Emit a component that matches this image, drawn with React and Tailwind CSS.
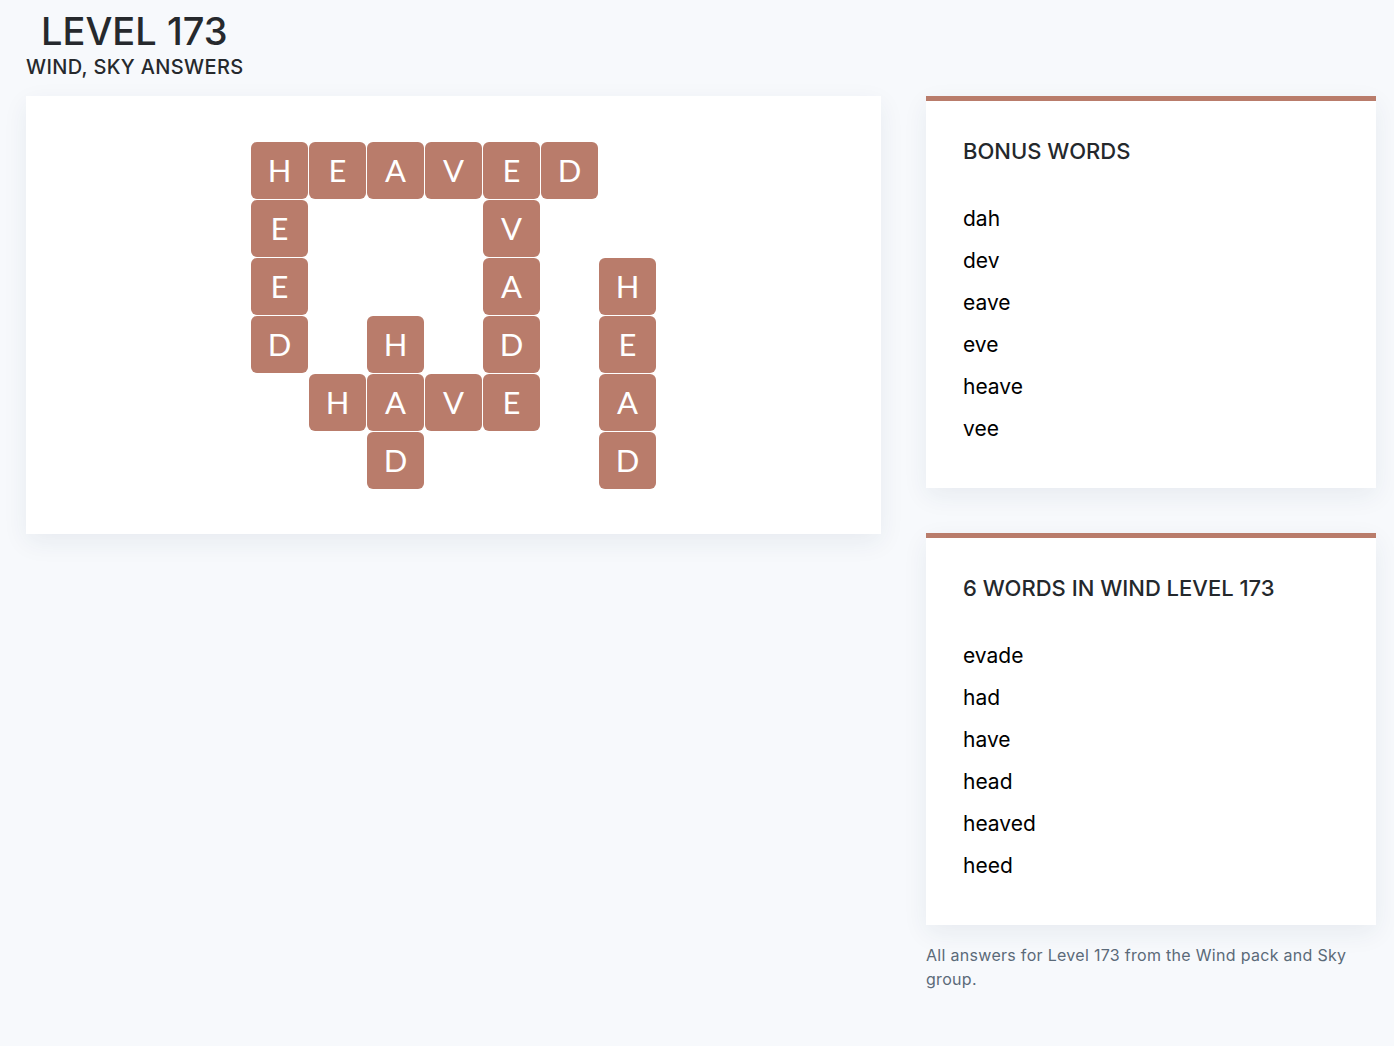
import React from "react";

const tiles = [
  ["H", "col-start-1 row-start-1"],
  ["E", "col-start-2 row-start-1"],
  ["A", "col-start-3 row-start-1"],
  ["V", "col-start-4 row-start-1"],
  ["E", "col-start-5 row-start-1"],
  ["D", "col-start-6 row-start-1"],
  ["E", "col-start-1 row-start-2"],
  ["V", "col-start-5 row-start-2"],
  ["E", "col-start-1 row-start-3"],
  ["A", "col-start-5 row-start-3"],
  ["H", "col-start-7 row-start-3"],
  ["D", "col-start-1 row-start-4"],
  ["H", "col-start-3 row-start-4"],
  ["D", "col-start-5 row-start-4"],
  ["E", "col-start-7 row-start-4"],
  ["H", "col-start-2 row-start-5"],
  ["A", "col-start-3 row-start-5"],
  ["V", "col-start-4 row-start-5"],
  ["E", "col-start-5 row-start-5"],
  ["A", "col-start-7 row-start-5"],
  ["D", "col-start-3 row-start-6"],
  ["D", "col-start-7 row-start-6"],
];

const bonus = ["dah", "dev", "eave", "eve", "heave", "vee"];
const words = ["evade", "had", "have", "head", "heaved", "heed"];

function Panel({ title, items }) {
  return (
    <div className="bg-white border-t-[5px] border-[#b97c6b] shadow-[0_8px_24px_rgba(30,50,90,0.07)] px-[37px] pt-[36px] pb-[38px]">
      <h2 className="text-[22px] leading-[28px] font-medium text-[#24282c]">{title}</h2>
      <ul className="mt-[33px]">
        {items.map((w) => (
          <li key={w} className="text-[21px] leading-[42px] text-black">{w}</li>
        ))}
      </ul>
    </div>
  );
}

export default function App() {
  return (
    <div className="min-h-[1046px] bg-[#f7f9fc] pl-[26px] pr-[18px]" style={{ fontFamily: "Inter, 'Noto Sans', sans-serif" }}>
      <header className="pt-[9px]">
        <h1 className="pl-[15px] text-[38px] leading-[44px] font-medium text-[#26292d]">LEVEL 173</h1>
        <p className="text-[20px] leading-[24px] font-medium tracking-[0.35px] text-[#26292d] mt-[2px]">WIND, SKY ANSWERS</p>
      </header>
      <div className="flex items-start gap-[45px] mt-[17px]">
        <div className="w-[855px] h-[438px] bg-white shadow-[0_8px_24px_rgba(30,50,90,0.07)] flex justify-center pt-[46px]">
          <div className="grid grid-cols-[repeat(7,57px)] grid-rows-[repeat(6,57px)] gap-[1px] h-fit" style={{ fontFamily: "Lato, 'Open Sans', sans-serif" }}>
            {tiles.map(([l, pos], i) => (
              <div key={i} className={`${pos} bg-[#b97c6b] rounded-[6px] flex items-center justify-center text-white text-[31px]`}>
                {l}
              </div>
            ))}
          </div>
        </div>
        <div className="w-[450px] flex flex-col">
          <Panel title="BONUS WORDS" items={bonus} />
          <div className="h-[45px]" />
          <Panel title="6 WORDS IN WIND LEVEL 173" items={words} />
          <p className="mt-[18px] text-[16px] leading-[24px] tracking-[0.3px] text-[#5b6a79]">
            All answers for Level 173 from the Wind pack and Sky group.
          </p>
        </div>
      </div>
    </div>
  );
}
